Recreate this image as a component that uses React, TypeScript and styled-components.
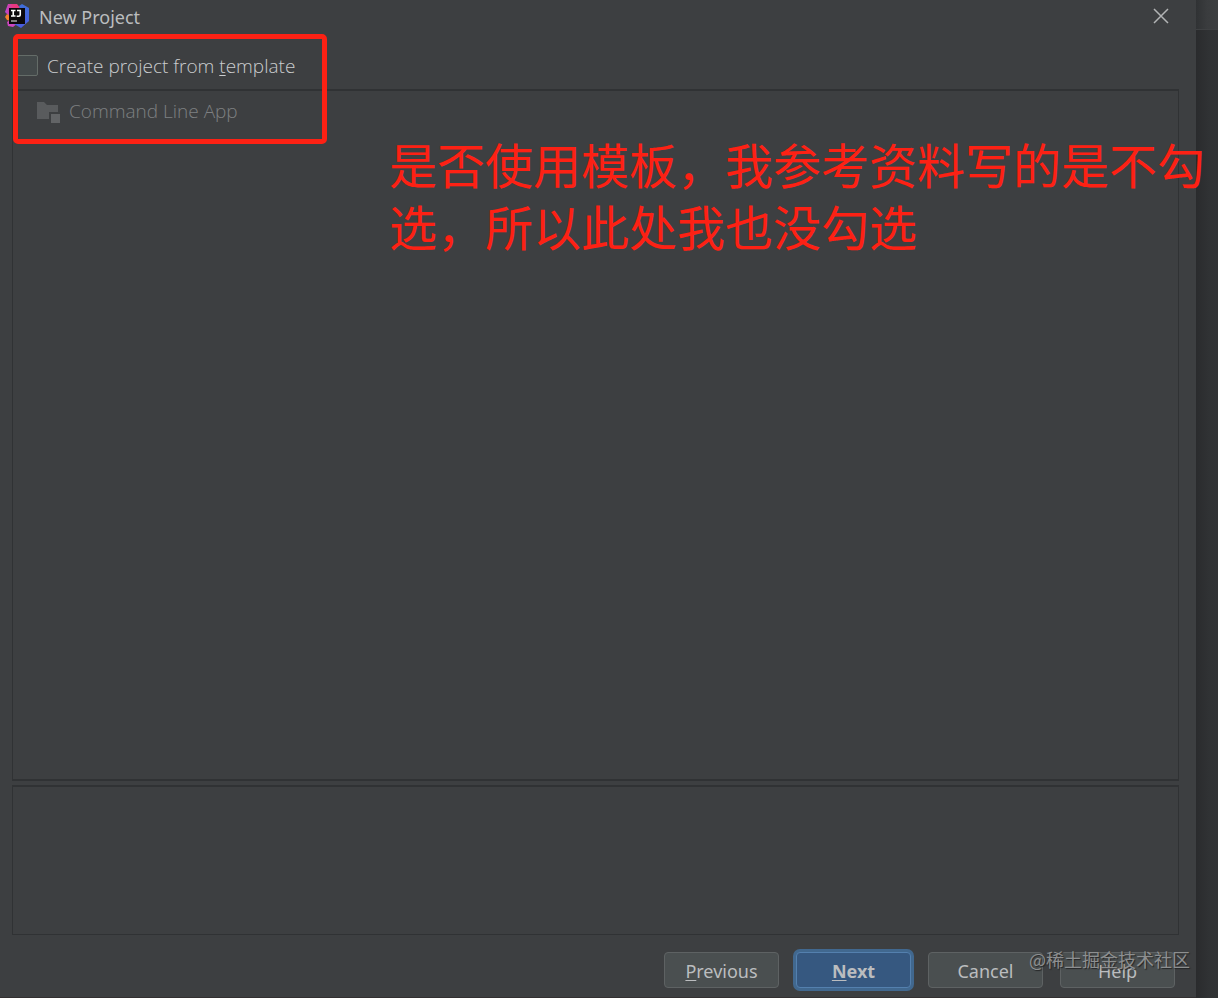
import React from "react";
import styled, { createGlobalStyle } from "styled-components";

const GlobalStyle = createGlobalStyle`
  *, *::before, *::after { box-sizing: border-box; }
  body {
    margin: 0;
    background: #3d3f41;
    color: #bbbdbf;
    font-family: "Noto Sans", "Noto Sans CJK SC", sans-serif;
    font-size: 18px;
    line-height: 24px;
  }
`;

const Screen = styled.div`
  display: flex;
  min-height: 100vh;
`;

const Dialog = styled.main`
  position: relative;
  flex: 1;
  min-width: 0;
  display: flex;
  flex-direction: column;
  background: #3d3f41;
  border-bottom: 1px solid #333031;
`;

const Backdrop = styled.div`
  width: 22px;
  background: linear-gradient(90deg, #2a2b2d, #303234 60%, #313335);
`;

const BackdropBar = styled.div`
  height: 30px;
  background: linear-gradient(90deg, #303234, #3a3c3e 50%, #3d3f41);
  border-bottom: 1px solid #3f4143;
`;

const TitleBar = styled.header`
  display: flex;
  align-items: center;
  height: 34px;
  padding: 0 26px 2px 4px;
`;

const Title = styled.h1`
  flex: 1;
  margin: 0 0 0 9px;
  padding-top: 2px;
  font-size: 18px;
  font-weight: 400;
`;

const CloseButton = styled.button`
  display: flex;
  padding: 0;
  border: 0;
  background: none;
`;

const OptionRow = styled.div`
  display: flex;
  align-items: center;
  height: 55px;
  padding: 8px 17px 0;
`;

const OptionLabel = styled.label`
  display: flex;
  align-items: center;
  gap: 9px;
  font-family: "Open Sans", sans-serif;
  font-size: 19px;
  font-weight: 300;
  color: #cbcdcf;
`;

const Checkbox = styled.input`
  appearance: none;
  width: 21px;
  height: 21px;
  margin: 0;
  border: 1px solid #646c68;
  border-radius: 2px;
  background: #43494a;
`;

const Mnemonic = styled.span`
  text-decoration: underline;
  text-decoration-thickness: 1px;
  text-underline-offset: 2px;
`;

const Panels = styled.div`
  flex: 1;
  display: flex;
  flex-direction: column;
  gap: 4px;
  margin: 0 17px 0 12px;
`;

const TemplateList = styled.ul`
  flex: 1;
  margin: 0;
  padding: 8px 23px;
  list-style: none;
  border: 1px solid #303234;
  border-top-width: 2px;
  border-bottom-width: 2px;
`;

const TemplateItem = styled.li`
  display: flex;
  align-items: center;
  gap: 9px;
  font-family: "Open Sans", sans-serif;
  font-size: 19px;
  font-weight: 300;
  color: #7e8082;
`;

const Description = styled.section`
  height: 150px;
  border: 1px solid #303234;
  border-top-width: 2px;
`;

const Footer = styled.footer`
  display: flex;
  justify-content: flex-end;
  gap: 17px;
  padding: 17px 21px 9px;
`;

const Button = styled.button<{ $primary?: boolean }>`
  width: 115px;
  height: 36px;
  padding: 1px 0 0;
  border: 1px solid ${(p) => (p.$primary ? "#5480ae" : "#5e6263")};
  border-radius: 4px;
  background: ${(p) => (p.$primary ? "#365880" : "#4a4f50")};
  box-shadow: ${(p) => (p.$primary ? "0 0 0 3px #41688f" : "none")};
  color: #bbbdbf;
  font: inherit;
  font-weight: ${(p) => (p.$primary ? 700 : 400)};
`;

const Highlight = styled.div`
  position: absolute;
  top: 34px;
  left: 13px;
  width: 314px;
  height: 110px;
  border: 5px solid #fd2114;
  border-radius: 5px;
  pointer-events: none;
`;

const Note = styled.p`
  position: absolute;
  top: 132px;
  left: 389px;
  width: 820px;
  margin: 0;
  color: #fd2114;
  font-family: "Noto Sans CJK SC", sans-serif;
  font-size: 48px;
  font-weight: 400;
  line-height: 62px;
  pointer-events: none;
`;

const Watermark = styled.div`
  position: absolute;
  right: 6px;
  bottom: 26px;
  color: #8d8f90;
  font-family: "Noto Sans CJK SC", sans-serif;
  font-size: 18px;
  font-weight: 400;
  text-shadow: 1px 1px 1px #242526;
  pointer-events: none;
  white-space: nowrap;
`;

const Logo = () => (
  <svg width="26" height="26" viewBox="0 0 26 26" aria-hidden="true">
    <defs>
      <linearGradient id="pink" x1="0" y1="0" x2="1" y2="0">
        <stop offset="0" stopColor="#b548d8" />
        <stop offset="0.5" stopColor="#e8387f" />
        <stop offset="1" stopColor="#e8387f" />
      </linearGradient>
      <linearGradient id="blue" x1="0" y1="0" x2="0" y2="1">
        <stop offset="0" stopColor="#3f6fd8" />
        <stop offset="1" stopColor="#4a5be0" />
      </linearGradient>
    </defs>
    <path d="M4 1 13 1 17 6 6 14 1 9Z" fill="url(#pink)" />
    <path d="M1 14 3 11 6 13 6 18 3 17Z" fill="#f5812b" />
    <path d="M3 19 6 17 14 20 9 24 4 23Z" fill="#cf45c0" />
    <path d="M15 3 18 1 25 5 25 18 17 25 10 21 20 18Z" fill="url(#blue)" />
    <path d="M5 5H21V21H5Z" fill="#0b080c" />
    <path d="M7 7.500H11.500M9.250 7.500V13M7 13H11.500M13 7.500H16.250V11.500Q16.250 13.200 14.500 13.200H12.700" fill="none" stroke="#fff" strokeWidth="1.600" />
    <path d="M7 18H13" stroke="#c9c9c9" strokeWidth="1.200" />
  </svg>
);

const CloseIcon = () => (
  <svg width="18" height="18" viewBox="0 0 18 18" aria-hidden="true">
    <path d="M2 2 16 16M16 2 2 16" stroke="#b2b4b5" strokeWidth="1.500" />
  </svg>
);

const FolderIcon = () => (
  <svg width="24" height="24" viewBox="0 0 24 24" aria-hidden="true">
    <path d="M1 3H8L11 6H22V13H13V20H1Z" fill="#595b5d" />
    <path d="M15 15H24V24H15Z" fill="#626466" />
  </svg>
);

export default function App() {
  return (
    <Screen>
      <GlobalStyle />
      <Dialog>
        <TitleBar>
          <Logo />
          <Title>New Project</Title>
          <CloseButton type="button" aria-label="Close">
            <CloseIcon />
          </CloseButton>
        </TitleBar>
        <OptionRow>
          <OptionLabel>
            <Checkbox type="checkbox" />
            <span>
              Create project from <Mnemonic>t</Mnemonic>emplate
            </span>
          </OptionLabel>
        </OptionRow>
        <Panels>
          <TemplateList>
            <TemplateItem>
              <FolderIcon />
              Command Line App
            </TemplateItem>
          </TemplateList>
          <Description aria-label="Template description" />
        </Panels>
        <Footer>
          <Button type="button">
            <Mnemonic>P</Mnemonic>revious
          </Button>
          <Button type="button" $primary>
            <Mnemonic>N</Mnemonic>ext
          </Button>
          <Button type="button">Cancel</Button>
          <Button type="button">Help</Button>
        </Footer>
        <Highlight />
        <Note>是否使用模板，我参考资料写的是不勾选，所以此处我也没勾选</Note>
        <Watermark>@稀土掘金技术社区</Watermark>
      </Dialog>
      <Backdrop>
        <BackdropBar />
      </Backdrop>
    </Screen>
  );
}
